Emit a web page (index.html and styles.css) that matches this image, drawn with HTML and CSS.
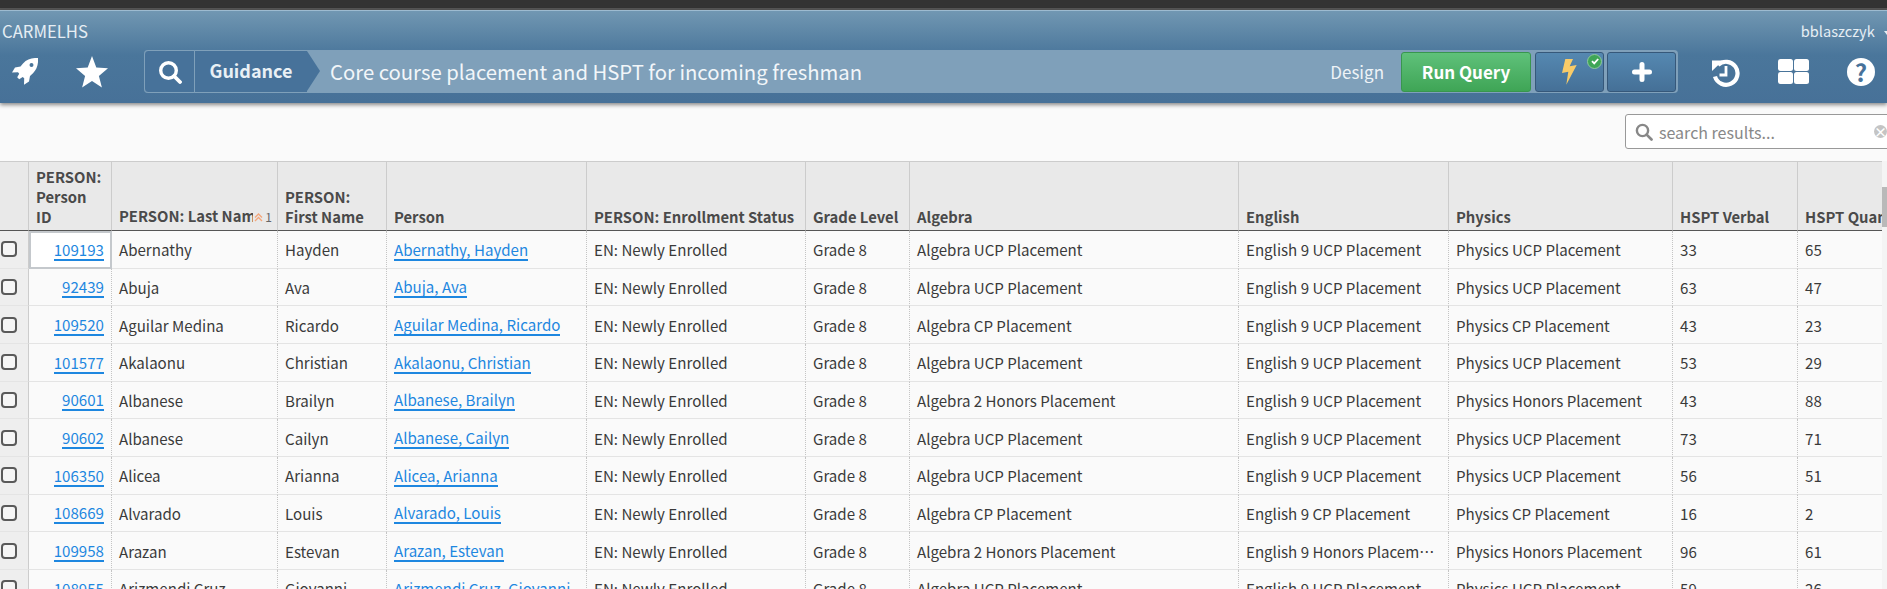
FILE: index.html
```html
<!DOCTYPE html>
<html>
<head>
<meta charset="UTF-8">
<title>Guidance - Core course placement and HSPT for incoming freshman</title>
<link rel="stylesheet" href="styles.css">
</head>
<body>

<div class="topstrip"></div>

<div class="header">
  <div class="brand-row">
    <span class="brand">CARMELHS</span>
    <span class="user">bblaszczyk <i class="caret"></i></span>
  </div>
  <div class="tool-row">
    <div class="nav-icons">
      <svg class="rocket" viewBox="0 0 26 27"><path fill="#fff" fill-rule="evenodd" d="M26 0c-6-.3-11 1-15 5.500L8.500 8.500 3 9.500 0 14.500l6-.2 1.200 1.500-2 3.500 2 2 3.500-2.200 1.500 1.200-.2 6.400 5-3.300 1-5.500 3-2.600C25 11 26.500 6 26 0zM19.500 5a2 2 0 1 1 0 4 2 2 0 0 1 0-4z"/></svg>
      <svg class="star" viewBox="0 0 32 32"><polygon fill="#fff" points="16,0 20.300,11.600 32,12.300 22.900,19.900 25.900,31.500 16,25 6.100,31.500 9.100,19.900 0,12.300 11.700,11.600"/></svg>
    </div>
    <div class="crumbs">
      <div class="crumb-search">
        <svg viewBox="0 0 24 24" width="24" height="24"><circle cx="10.500" cy="10.500" r="7.800" fill="none" stroke="#fff" stroke-width="3.400"/><path d="M16 16l6 6" stroke="#fff" stroke-width="3.800" stroke-linecap="round"/></svg>
      </div>
      <div class="crumb-group">Guidance</div>
      <div class="query-title">Core course placement and HSPT for incoming freshman</div>
      <div class="design">Design</div>
      <button class="run-btn">Run Query</button>
      <button class="tool-btn">
        <svg viewBox="0 0 15 26" width="15" height="26"><polygon fill="#f9cb68" points="3.300,0 11,0 7.700,7.300 14.700,6 4.300,25.700 6.300,12.700 0,14"/></svg>
        <span class="ok-badge"><svg viewBox="0 0 12 12" width="12" height="12"><path d="M3 6.200l2.200 2.200L9.200 4" fill="none" stroke="#fff" stroke-width="1.800"/></svg></span>
      </button>
      <button class="tool-btn">
        <svg viewBox="0 0 20 20" width="20" height="20"><path d="M10 2.500v15M2.500 10h15" stroke="#fff" stroke-width="5" stroke-linecap="round"/></svg>
      </button>
    </div>
    <div class="right-icons">
      <svg class="history" viewBox="0 0 28 28"><path fill="none" stroke="#fff" stroke-width="4.200" d="M6 6A11.500 11.500 0 1 1 3 17.500"/><polygon fill="#fff" points="0,1.500 11,1.500 0,12"/><path fill="none" stroke="#fff" stroke-width="2.800" d="M14 7v9H7.500"/></svg>
      <svg class="panels" viewBox="0 0 31 25"><rect width="15" height="12" rx="2.500" fill="#fff"/><rect x="16" width="15" height="12" rx="2.500" fill="#fff"/><rect y="13" width="15" height="12" rx="2.500" fill="#fff"/><rect x="16" y="13" width="15" height="12" rx="2.500" fill="#fff"/></svg>
      <span class="help">?</span>
    </div>
  </div>
</div>

<div class="search-row">
  <div class="results-search">
    <svg viewBox="0 0 24 24" width="18" height="18"><circle cx="10" cy="10" r="7.500" fill="none" stroke="#888" stroke-width="3.200"/><path d="M15.500 15.500l6.500 6.500" stroke="#888" stroke-width="3.600" stroke-linecap="round"/></svg>
    <span class="placeholder">search results...</span>
    <span class="clear">&times;</span>
  </div>
</div>

<div class="grid-wrap">
  <table class="grid">
    <colgroup>
      <col class="c-check"><col class="c-id"><col class="c-last"><col class="c-first"><col class="c-person"><col class="c-status"><col class="c-grade"><col class="c-alg"><col class="c-eng"><col class="c-phy"><col class="c-verbal"><col class="c-quant">
    </colgroup>
    <thead>
      <tr>
        <th></th>
        <th>PERSON:<br>Person<br>ID</th>
        <th><div class="sort-head"><span class="sort-name">PERSON: Last Name</span><svg class="sort-mark" viewBox="0 0 9 9" width="9" height="9"><path d="M1 4.500l3.500-3.500L8 4.500M1 8l3.500-3.500L8 8" fill="none" stroke="#f5a67a" stroke-width="1.300"/></svg><span class="sort-num">1</span></div></th>
        <th>PERSON:<br>First Name</th>
        <th>Person</th>
        <th>PERSON: Enrollment Status</th>
        <th>Grade Level</th>
        <th>Algebra</th>
        <th>English</th>
        <th>Physics</th>
        <th>HSPT Verbal</th>
        <th>HSPT Quant</th>
      </tr>
    </thead>
    <tbody>
      <tr><td class="check"><span class="box"></span></td><td class="id focused"><a>109193</a></td><td>Abernathy</td><td>Hayden</td><td><a>Abernathy, Hayden</a></td><td>EN: Newly Enrolled</td><td>Grade 8</td><td>Algebra UCP Placement</td><td>English 9 UCP Placement</td><td>Physics UCP Placement</td><td>33</td><td>65</td></tr>
      <tr><td class="check"><span class="box"></span></td><td class="id"><a>92439</a></td><td>Abuja</td><td>Ava</td><td><a>Abuja, Ava</a></td><td>EN: Newly Enrolled</td><td>Grade 8</td><td>Algebra UCP Placement</td><td>English 9 UCP Placement</td><td>Physics UCP Placement</td><td>63</td><td>47</td></tr>
      <tr><td class="check"><span class="box"></span></td><td class="id"><a>109520</a></td><td>Aguilar Medina</td><td>Ricardo</td><td><a>Aguilar Medina, Ricardo</a></td><td>EN: Newly Enrolled</td><td>Grade 8</td><td>Algebra CP Placement</td><td>English 9 UCP Placement</td><td>Physics CP Placement</td><td>43</td><td>23</td></tr>
      <tr><td class="check"><span class="box"></span></td><td class="id"><a>101577</a></td><td>Akalaonu</td><td>Christian</td><td><a>Akalaonu, Christian</a></td><td>EN: Newly Enrolled</td><td>Grade 8</td><td>Algebra UCP Placement</td><td>English 9 UCP Placement</td><td>Physics UCP Placement</td><td>53</td><td>29</td></tr>
      <tr><td class="check"><span class="box"></span></td><td class="id"><a>90601</a></td><td>Albanese</td><td>Brailyn</td><td><a>Albanese, Brailyn</a></td><td>EN: Newly Enrolled</td><td>Grade 8</td><td>Algebra 2 Honors Placement</td><td>English 9 UCP Placement</td><td>Physics Honors Placement</td><td>43</td><td>88</td></tr>
      <tr><td class="check"><span class="box"></span></td><td class="id"><a>90602</a></td><td>Albanese</td><td>Cailyn</td><td><a>Albanese, Cailyn</a></td><td>EN: Newly Enrolled</td><td>Grade 8</td><td>Algebra UCP Placement</td><td>English 9 UCP Placement</td><td>Physics UCP Placement</td><td>73</td><td>71</td></tr>
      <tr><td class="check"><span class="box"></span></td><td class="id"><a>106350</a></td><td>Alicea</td><td>Arianna</td><td><a>Alicea, Arianna</a></td><td>EN: Newly Enrolled</td><td>Grade 8</td><td>Algebra UCP Placement</td><td>English 9 UCP Placement</td><td>Physics UCP Placement</td><td>56</td><td>51</td></tr>
      <tr><td class="check"><span class="box"></span></td><td class="id"><a>108669</a></td><td>Alvarado</td><td>Louis</td><td><a>Alvarado, Louis</a></td><td>EN: Newly Enrolled</td><td>Grade 8</td><td>Algebra CP Placement</td><td>English 9 CP Placement</td><td>Physics CP Placement</td><td>16</td><td>2</td></tr>
      <tr><td class="check"><span class="box"></span></td><td class="id"><a>109958</a></td><td>Arazan</td><td>Estevan</td><td><a>Arazan, Estevan</a></td><td>EN: Newly Enrolled</td><td>Grade 8</td><td>Algebra 2 Honors Placement</td><td>English 9 Honors Placement</td><td>Physics Honors Placement</td><td>96</td><td>61</td></tr>
      <tr><td class="check"><span class="box"></span></td><td class="id"><a>108955</a></td><td>Arizmendi Cruz</td><td>Giovanni</td><td><a>Arizmendi Cruz, Giovanni</a></td><td>EN: Newly Enrolled</td><td>Grade 8</td><td>Algebra UCP Placement</td><td>English 9 UCP Placement</td><td>Physics UCP Placement</td><td>59</td><td>26</td></tr>
    </tbody>
  </table>
  <div class="scrollbar"><div class="scroll-thumb"></div></div>
</div>

</body>
</html>
```

FILE: styles.css
```css
html, body {
  height: 100%;
}

body {
  margin: 0;
  overflow: hidden;
  background: #fafafa;
  color: #3a3a3a;
  font-family: "Noto Sans CJK SC", "Open Sans", sans-serif;
  font-size: 15px;
}

button {
  font-family: inherit;
}

/* Top of the page */
.topstrip {
  height: 8px;
  background: #333333;
  border-bottom: 2px solid #555555;
}

.header {
  height: 93px;
  background: linear-gradient(#7197b2 0, #4a769b 44px, #477198 100%);
  border-top: 1px solid #9dbbd0;
  box-sizing: border-box;
  box-shadow: 0 2px 4px rgba(0, 0, 0, 0.45);
  color: #ffffff;
  position: relative;
}

.brand-row {
  display: flex;
  justify-content: space-between;
  height: 39px;
  padding: 0 0 0 2px;
  line-height: 40px;
  color: #e6eef4;
}

.brand {
  font-size: 16.700px;
}

.user {
  font-size: 14.600px;
  white-space: nowrap;
  margin-right: -3px;
}

.caret {
  display: inline-block;
  width: 0;
  height: 0;
  margin-left: 6px;
  vertical-align: 2px;
  border-top: 4px solid #e6eef4;
  border-left: 3px solid transparent;
  border-right: 3px solid transparent;
}

.tool-row {
  display: flex;
  align-items: center;
  height: 43px;
}

.nav-icons {
  display: flex;
  align-items: center;
  width: 144px;
  flex-shrink: 0;
  padding-left: 12px;
  box-sizing: border-box;
  gap: 38px;
}

.rocket {
  width: 26px;
  height: 27px;
}

.star {
  width: 32px;
  height: 32px;
}

/* Query title bar */
.crumbs {
  display: flex;
  align-items: center;
  width: 1534px;
  height: 43px;
  box-sizing: border-box;
  flex-shrink: 0;
  background: #7fa0ba;
  border-radius: 4px;
  padding-right: 2px;
}

.crumb-search {
  display: flex;
  align-items: center;
  justify-content: center;
  width: 51px;
  height: 43px;
  box-sizing: border-box;
  background: #47729a;
  border: 1px solid #7fa0ba;
  border-radius: 4px 0 0 4px;
  flex-shrink: 0;
}

.crumb-group {
  position: relative;
  width: 112px;
  height: 43px;
  box-sizing: border-box;
  background: #47729a;
  border: solid #7fa0ba;
  border-width: 1px 0;
  text-align: center;
  font-size: 18px;
  font-weight: 700;
  line-height: 39px;
  color: #e9f0f5;
  flex-shrink: 0;
}

.crumb-group::after {
  content: "";
  position: absolute;
  right: -13px;
  top: 0;
  border-left: 13px solid #47729a;
  border-top: 20.500px solid transparent;
  border-bottom: 20.500px solid transparent;
}

.query-title {
  flex: 1;
  padding-left: 23px;
  font-size: 20.300px;
  line-height: 43px;
  white-space: nowrap;
  color: #f2f6f9;
}

.design {
  margin-right: 17px;
  font-size: 17px;
  color: #eef3f7;
}

.run-btn {
  width: 130px;
  height: 40px;
  margin-right: 4px;
  background: linear-gradient(#5fc17a, #3fa556);
  border: 1px solid #38964e;
  border-radius: 3px;
  color: #ffffff;
  font-size: 17px;
  font-weight: 700;
}

.tool-btn {
  position: relative;
  display: flex;
  align-items: center;
  justify-content: center;
  width: 69px;
  height: 40px;
  margin-right: 3px;
  padding: 0;
  background: linear-gradient(#5588b1, #457097);
  border: 1px solid #36587a;
  border-radius: 3px;
}

.tool-btn:last-child {
  margin-right: 0;
}

.ok-badge {
  position: absolute;
  top: 1px;
  right: 1px;
  width: 15px;
  height: 15px;
  border-radius: 50%;
  background: #3fa556;
  border: 1px solid #8fc79f;
  box-sizing: border-box;
  display: flex;
  align-items: center;
  justify-content: center;
}

.right-icons {
  display: flex;
  align-items: center;
  margin-left: 34px;
  gap: 38px;
}

.history {
  width: 28px;
  height: 28px;
  margin-top: 2px;
}

.panels {
  width: 31px;
  height: 25px;
}

.help {
  width: 28px;
  height: 28px;
  border-radius: 50%;
  background: #ffffff;
  color: #47729a;
  font-size: 24px;
  font-weight: 700;
  line-height: 28px;
  text-align: center;
}

/* Search over the results */
.search-row {
  display: flex;
  justify-content: flex-end;
  height: 58px;
  padding-top: 11px;
  box-sizing: border-box;
}

.results-search {
  display: flex;
  align-items: center;
  flex-shrink: 0;
  width: 271px;
  height: 35px;
  margin-right: -9px;
  padding-left: 9px;
  box-sizing: border-box;
  background: #ffffff;
  border: 1px solid #999999;
  border-radius: 3px;
  color: #888888;
}

.placeholder {
  margin-left: 6px;
  font-size: 16px;
}

.clear {
  display: block;
  width: 13px;
  height: 13px;
  margin-left: 99px;
  border-radius: 50%;
  background: #c4c4c4;
  color: #ffffff;
  font-size: 13px;
  font-weight: 700;
  line-height: 13px;
  text-align: center;
}

/* Results grid */
.grid-wrap {
  position: relative;
  height: 428px;
  overflow: hidden;
}

.grid {
  table-layout: fixed;
  width: 1920px;
  border-collapse: separate;
  border-spacing: 0;
}

.c-check { width: 29px; }
.c-id { width: 83px; }
.c-last { width: 166px; }
.c-first { width: 109px; }
.c-person { width: 200px; }
.c-status { width: 219px; }
.c-grade { width: 104px; }
.c-alg { width: 329px; }
.c-eng { width: 210px; }
.c-phy { width: 224px; }
.c-verbal { width: 125px; }
.c-quant { width: 122px; }

.grid th {
  height: 70px;
  padding: 0 7px 3px;
  box-sizing: border-box;
  background: #e9e9e9;
  border-top: 1px solid #cccccc;
  border-bottom: 1px solid #555555;
  border-right: 1px solid #cccccc;
  color: #4a4a4a;
  font-size: 14.800px;
  font-weight: 700;
  line-height: 20px;
  text-align: left;
  vertical-align: bottom;
  white-space: nowrap;
  overflow: hidden;
}

.sort-head {
  display: flex;
  align-items: baseline;
}

.sort-name {
  overflow: hidden;
  flex: 1;
}

.sort-mark {
  margin-left: 1px;
}

.sort-num {
  color: #666666;
  font-size: 12px;
  font-weight: 400;
  margin: 0 -2px 0 2px;
}

.grid td {
  height: 37.670px;
  padding: 0 7px;
  box-sizing: border-box;
  border-bottom: 1px solid #e4e4e4;
  border-right: 1px dotted #c4c4c4;
  font-size: 15.100px;
  white-space: nowrap;
  overflow: hidden;
  text-overflow: ellipsis;
}

.grid td.check {
  padding: 0 0 0 1px;
  background: #eeeeee;
  border-right: 1px solid #cccccc;
}

.box {
  display: block;
  width: 12px;
  height: 12px;
  background: #f6f6f6;
  border: 2px solid #5a5a5a;
  border-radius: 4px;
}

.grid td.id {
  text-align: right;
}

.grid td.focused {
  outline: 2px solid #c4c8cc;
  outline-offset: -2px;
  background: #ffffff;
}

.grid a {
  display: inline-block;
  color: #1e87e0;
  line-height: 20px;
  border-bottom: 2px solid #1e87e0;
}

.scrollbar {
  position: absolute;
  top: 0;
  right: 0;
  bottom: 0;
  width: 5px;
  background: #f4f4f4;
}

.scroll-thumb {
  height: 40px;
  margin-top: 26px;
  background: #b9b9b9;
}
```
